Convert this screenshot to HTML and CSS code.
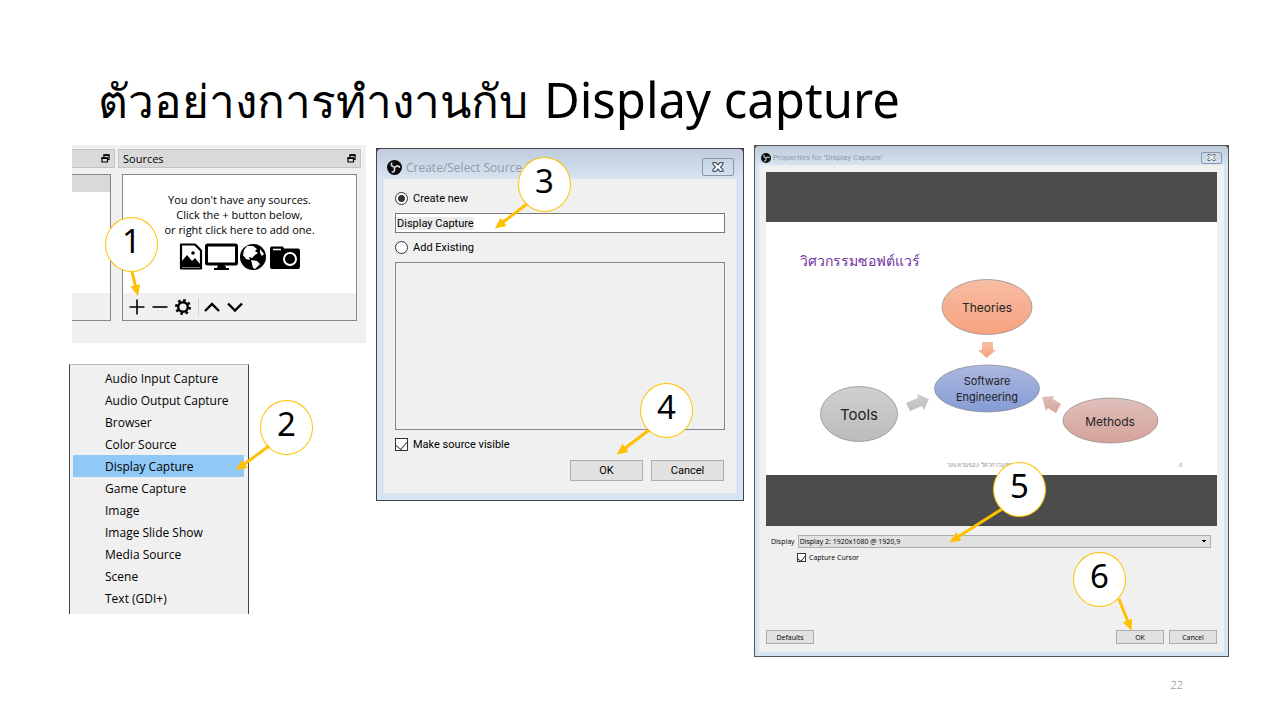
FILE: index.html
```html
<!DOCTYPE html>
<html lang="th">
<head>
<meta charset="utf-8">
<title>Display capture</title>
<link rel="stylesheet" href="styles.css">
</head>
<body>
<svg class="defs" aria-hidden="true">
  <defs>
    <marker id="head" markerUnits="userSpaceOnUse" markerWidth="11" markerHeight="10" refX="7" refY="5" orient="auto"><path d="M0 0L11 5L0 10z" fill="#ffc000"/></marker>
    <symbol id="obs" viewBox="0 0 32 32"><circle cx="16" cy="16" r="16" fill="#0b0b0b"/><g fill="none" stroke="#d8dde3" stroke-width="3.500" stroke-linecap="round"><path d="M15 15C10 14 8 11 10 7"/><path d="M15 15C10 14 8 11 10 7" transform="rotate(120 16 16)"/><path d="M15 15C10 14 8 11 10 7" transform="rotate(240 16 16)"/></g></symbol>
    <symbol id="close" viewBox="0 0 12 10"><path d="M1 .7h3l2 2.3 2-2.3h3v1.6L8.500 5 11 7.700v1.600H8L6 7 4 9.300H1V7.700L3.500 5 1 2.300z" fill="#fff" stroke="#4d5666" stroke-width="1.200"/></symbol>
    <symbol id="float" viewBox="0 0 9 9"><path d="M3 3V1h5v4.500H6.500M1 4h5.500v4H1z" fill="none" stroke="#000" stroke-width="1.200"/><path d="M2.500 1.200H8.500M.5 4.200H7" stroke="#000" stroke-width="1.800"/></symbol>
  </defs>
</svg>
<main class="slide">
  <h1 class="title"><span class="title-thai">ตัวอย่างการทำงานกับ</span> <span class="title-latin">Display capture</span></h1>
  <div class="shots">
    <div class="left">
      <section class="docks">
        <div class="dock dock-cut">
          <div class="dock-head"><svg class="float"><use href="#float"/></svg></div>
          <div class="dock-list"><div class="cut-row"></div><div class="dock-body"></div><div class="dock-tools"></div></div>
        </div>
        <div class="dock dock-main">
          <div class="dock-head"><span>Sources</span><svg class="float"><use href="#float"/></svg></div>
          <div class="dock-list">
            <div class="dock-body empty">
              <p>You don't have any sources.<br>Click the + button below,<br>or right click here to add one.</p>
              <svg class="kinds" viewBox="0 0 122 28">
                <path d="M2 1.500h14l6 6V25.500H2z" fill="#fff" stroke="#000" stroke-width="2.200" stroke-linejoin="round"/><path d="M3 24v-6l5-6 5 6 3-3 5 6v3z"/><circle cx="14" cy="10" r="1.800"/>
                <rect x="27.500" y="2" width="30" height="19" rx="1" fill="#fff" stroke="#000" stroke-width="3"/><path d="M39 22h7l1 3h3v2H35v-2h3z"/>
                <circle cx="74" cy="14" r="13"/><path d="M68 3l6 0 4 3-2 2 3 2-3 2-3 3-3-1 1 3-4-1-3-4 1-5zM72 17l6 1 3 3-5 5-2-1zM81 6l4 5-2 2-2-3z" fill="#fff"/>
                <path d="M92 3.500h12l1 2h14a2 2 0 0 1 2 2V24a2 2 0 0 1-2 2H93a2 2 0 0 1-2-2V5z"/><path d="M94 6.500h8" stroke="#fff" stroke-width="1.500"/><circle cx="111" cy="16" r="6" fill="none" stroke="#fff" stroke-width="2"/>
              </svg>
            </div>
            <div class="dock-tools">
              <button class="tool" aria-label="Add"><svg viewBox="0 0 16 16"><path d="M8 .5v15M.5 8h15"/></svg></button>
              <button class="tool" aria-label="Remove"><svg viewBox="0 0 16 16"><path d="M.5 8h15"/></svg></button>
              <button class="tool" aria-label="Settings"><svg viewBox="0 0 16 16"><circle cx="8" cy="8" r="4.800" stroke-width="2.400"/><circle cx="8" cy="8" r="6.700" stroke-width="2.600" stroke-dasharray="2.600 2.660"/></svg></button>
              <span class="split"></span>
              <button class="tool" aria-label="Up"><svg viewBox="0 0 16 16"><path d="M1 12l7-7 7 7" stroke-width="2.400"/></svg></button>
              <button class="tool" aria-label="Down"><svg viewBox="0 0 16 16"><path d="M1 4.500l7 7 7-7" stroke-width="2.400"/></svg></button>
            </div>
          </div>
        </div>
        <div class="callout c1"><svg><path d="M26 54L31 74"/></svg>1</div>
      </section>
      <section class="menu-wrap">
        <ul class="menu">
          <li><button>Audio Input Capture</button></li>
          <li><button>Audio Output Capture</button></li>
          <li><button>Browser</button></li>
          <li><button>Color Source</button></li>
          <li><button class="on">Display Capture</button></li>
          <li><button>Game Capture</button></li>
          <li><button>Image</button></li>
          <li><button>Image Slide Show</button></li>
          <li><button>Media Source</button></li>
          <li><button>Scene</button></li>
          <li><button>Text (GDI+)</button></li>
        </ul>
        <div class="callout c2"><svg><path d="M8 45L-22 67"/></svg>2</div>
      </section>
    </div>

    <section class="dialog create">
      <div class="frame">
        <header class="bar"><svg class="logo"><use href="#obs"/></svg><span>Create/Select Source</span><button class="x" aria-label="Close"><svg><use href="#close"/></svg></button></header>
        <div class="body">
          <label class="opt"><input type="radio" name="mode" checked>Create new</label>
          <div class="field"><input class="name" type="text" value="Display Capture" aria-label="Source name"></div>
          <label class="opt"><input type="radio" name="mode">Add Existing</label>
          <div class="existing"></div>
          <label class="opt"><input type="checkbox" checked>Make source visible</label>
          <div class="actions"><button class="btn">OK</button><button class="btn">Cancel</button></div>
        </div>
      </div>
      <div class="callout c3"><svg><path d="M8 46L-21 68"/></svg>3</div>
      <div class="callout c4"><svg><path d="M8 46L-21 68"/></svg>4</div>
    </section>

    <section class="dialog props">
      <div class="frame">
        <header class="bar"><svg class="logo"><use href="#obs"/></svg><span>Properties for 'Display Capture'</span><button class="x" aria-label="Close"><svg><use href="#close"/></svg></button></header>
        <div class="body">
          <div class="preview">
            <svg class="diagram" viewBox="0 0 451 253">
              <defs>
                <linearGradient id="o" x2="0" y2="1"><stop stop-color="#f6bda6"/><stop offset="1" stop-color="#f8a27e"/></linearGradient>
                <linearGradient id="b" x2="0" y2="1"><stop stop-color="#abb8df"/><stop offset="1" stop-color="#869bd6"/></linearGradient>
                <linearGradient id="g" x2="0" y2="1"><stop stop-color="#d0d0d0"/><stop offset="1" stop-color="#bcbcbc"/></linearGradient>
                <linearGradient id="r" x2="0" y2="1"><stop stop-color="#dfc0bb"/><stop offset="1" stop-color="#d5a29a"/></linearGradient>
              </defs>
              <rect width="451" height="253" fill="#fff"/>
              <text class="d-title" x="34" y="44">วิศวกรรมซอฟต์แวร์</text>
              <g stroke="#888" stroke-width=".7">
                <ellipse cx="221" cy="85" rx="45" ry="27.500" fill="url(#o)"/>
                <ellipse cx="221" cy="166.500" rx="52.500" ry="23.500" fill="url(#b)"/>
                <ellipse cx="93" cy="192" rx="38.500" ry="27.500" fill="url(#g)"/>
                <ellipse cx="344.500" cy="198.500" rx="47.500" ry="22.500" fill="url(#r)"/>
              </g>
              <path d="M216 120h11v8h3l-9.500 8-8.500-8h4z" fill="url(#o)"/>
              <path d="M140 181l12-5-1-4 12 5-5 11-2-4-12 5z" fill="url(#g)"/>
              <path d="M276 175l12-1-1 3 8 5-5 9-8-5-2 3z" fill="url(#r)"/>
              <g class="d-text"><text x="221" y="90" font-size="12">Theories</text><text x="221" y="163" font-size="11">Software</text><text x="221" y="179" font-size="11">Engineering</text><text x="93" y="198" font-size="15">Tools</text><text x="344" y="204" font-size="12">Methods</text></g>
              <text class="d-foot" x="181" y="245">วงแหวนของ วิศวกรรมซอฟต์</text><text class="d-foot" x="413" y="245">8</text>
            </svg>
          </div>
          <div class="row"><label for="display">Display</label><select id="display"><option>Display 2: 1920x1080 @ 1920,9</option></select></div>
          <label class="opt cursor"><input type="checkbox" checked>Capture Cursor</label>
          <div class="actions"><button class="btn first">Defaults</button><button class="btn">OK</button><button class="btn">Cancel</button></div>
        </div>
      </div>
      <div class="callout c5"><svg><path d="M8 46L-41 77"/></svg>5</div>
      <div class="callout c6"><svg><path d="M45 46L56 74"/></svg>6</div>
    </section>
  </div>
  <footer class="page">22</footer>
</main>
</body>
</html>
```
FILE: styles.css
```css
* { box-sizing: border-box; }
body { margin: 0; background: #fff; color: #000; font-family: "Open Sans", "Noto Sans", sans-serif; font-size: 12px; }
button, input, select { font: inherit; color: inherit; margin: 0; padding: 0; }
svg { display: block; }
.defs { position: absolute; width: 0; height: 0; }
.slide { min-height: 100vh; padding: 60px 51px 0 69px; }
.title { margin: 0; padding-left: 29px; height: 85px; line-height: 78px; font-weight: 400; font-size: 46px; white-space: nowrap; }
.title-latin { margin-left: 4px; font-family: "Noto Sans", sans-serif; font-size: 49px; }
.shots { display: grid; grid-template-columns: 297fr 368fr 475fr; gap: 10px; align-items: start; }

/* OBS docks */
.docks { position: relative; margin-left: 3px; height: 198px; padding: 4px 5px 0 0; display: flex; gap: 3px; background: #f0f0f0; }
.dock { display: flex; flex-direction: column; gap: 6px; }
.dock-cut { width: 43px; }
.dock-main { flex: 1; }
.dock-head { height: 19px; padding: 0 4px; display: flex; align-items: center; justify-content: space-between; background: #dadada; border: 1px solid #c4c4c4; font-size: 11px; }
.dock-cut .dock-head { border-left: 0; justify-content: flex-end; }
.float { width: 9px; height: 9px; }
.dock-list { height: 147px; margin: 0 4px; display: flex; flex-direction: column; border: 1px solid #828790; background: #fff; }
.dock-cut .dock-list { margin-left: 0; border-left: 0; }
.cut-row { height: 17px; background: #d9d9d9; }
.dock-body { flex: 1; }
.empty { display: flex; flex-direction: column; align-items: center; gap: 6px; padding-top: 17px; }
.empty p { margin: 0; text-align: center; line-height: 15px; font-size: 11px; white-space: nowrap; }
.kinds { width: 122px; height: 28px; }
.dock-tools { height: 27px; padding: 0 6px; display: flex; align-items: center; gap: 7px; background: #f0f0f0; }
.tool { width: 16px; height: 16px; border: 0; background: none; }
.tool svg { width: 16px; height: 16px; fill: none; stroke: #000; stroke-width: 1.600; }
.split { width: 1px; height: 18px; margin-right: -2px; background: #d0d0d0; }

/* Source type menu */
.menu-wrap { position: relative; width: 180px; margin-top: 21px; }
.menu { margin: 0; padding: 2px 4px 5px 3px; list-style: none; background: #f0f0f0; border: 1px solid #444; border-top-color: #bbb; border-bottom: 0; }
.menu button { width: 100%; height: 22px; padding-left: 32px; border: 0; background: none; text-align: left; display: block; white-space: nowrap; }
.menu .on { background: #90c8f6; }

/* Dialog windows */
.dialog { position: relative; padding: 1px; background: #444; }
.frame { border-radius: 4px 4px 0 0; background: linear-gradient(#bfccdb, #d7e4f2 30px); padding: 0 7px 7px; }
.bar { display: flex; align-items: center; color: #929aa5; white-space: nowrap; }
.x { margin-left: auto; display: grid; place-items: center; border: 1px solid #8b97aa; border-radius: 2px; background: none; }
.body { background: #f0f0f0; display: flex; flex-direction: column; }
.opt { display: flex; align-items: center; white-space: nowrap; }
input[type=radio], input[type=checkbox] { appearance: none; flex: none; background: #fff; border: 1px solid #333; }
input[type=radio] { border-radius: 50%; }
input[type=radio]:checked { background: radial-gradient(circle, #333 0 3px, #fff 4px); }
input[type=checkbox]::after { content: ""; display: block; width: 50%; height: 80%; margin: 0 auto; border: solid #444; border-width: 0 1px 1px 0; transform: rotate(40deg); }
.actions { display: flex; justify-content: flex-end; }
.btn { background: #e1e1e1; border: 1px solid #adadad; }

.create { margin-top: 3px; font-size: 11px; }
.create .bar { height: 30px; padding: 6px 2px 0 3px; gap: 4px; font-size: 12px; }
.create .logo { width: 15px; height: 15px; }
.create .x { width: 32px; height: 18px; }
.create .x svg { width: 12px; height: 10px; }
.create .body { height: 314px; padding: 12px 11px; font-family: Roboto, sans-serif; }
.create .opt { height: 15px; gap: 5px; }
.create input[type=radio], .create input[type=checkbox] { width: 13px; height: 13px; }
.field { height: 20px; margin: 7px 0; background: #fff; border: 1px solid #7a7a7a; padding: 0 1px; }
.name { display: block; width: 100%; height: 18px; border: 0; background: linear-gradient(#ebebeb, #ebebeb) 0 3px / 77px 13px no-repeat; }
.existing { flex: 1; margin: 7px 0; border: 1px solid #828790; }
.create .actions { gap: 8px; margin-top: 8px; padding-right: 1px; }
.create .btn { width: 73px; height: 21px; }

.props { background: #555; font-size: 7px; }
.props .frame { padding: 0 4px 4px; background: linear-gradient(#bfccdb, #d7e4f2 20px); }
.props .bar { height: 19px; padding: 4px 2px 0; gap: 2px; font-size: 8px; font-family: Roboto, sans-serif; }
.props .logo { width: 10px; height: 10px; }
.props .x { width: 21px; height: 12px; }
.props .x svg { width: 9px; height: 7px; }
.props .body { height: 487px; padding: 7px; }
.preview { padding: 50px 0; background: #4c4c4c; border-bottom: 1px solid #444; }
.diagram { width: 100%; }
.d-title { font-size: 14px; font-weight: 500; fill: #7030a0; }
.d-text { text-anchor: middle; fill: #222; font-family: Inter, sans-serif; }
.d-foot { font-size: 6px; fill: #999; }
.row { display: flex; align-items: center; gap: 3px; margin: 9px 6px 0 5px; }
.row select { flex: 1; height: 13px; appearance: none; border: 1px solid #adadad; border-radius: 0; padding: 0 1px; background: #e1e1e1 conic-gradient(from -45deg at 50% 100%, #000 90deg, transparent 0) right 3px center / 6px 3px no-repeat; }
.cursor { gap: 3px; height: 13px; margin: 3px 0 0 31px; }
.props input[type=checkbox] { width: 9px; height: 9px; }
.props .actions { gap: 5px; margin: auto 0 1px; }
.props .btn { width: 48px; height: 14px; }
.props .first { margin-right: auto; }

/* Numbered callouts */
.callout { position: absolute; z-index: 1; width: 53px; height: 55px; border: 1px solid #ffc000; border-radius: 50%; background: #fff; font: 33px/46px "Noto Sans", sans-serif; text-align: center; }
.callout svg { position: absolute; inset: 0; width: 1px; height: 1px; overflow: visible; fill: none; stroke: #ffc000; stroke-width: 3; }
.callout path { marker-end: url(#head); }
.c1 { left: 33px; top: 72px; }
.c2 { left: 191px; top: 36px; }
.c3 { left: 142px; top: 9px; }
.c4 { left: 264px; top: 235px; }
.c5 { left: 239px; top: 317px; }
.c6 { left: 319px; top: 407px; }

.page { margin-top: 20px; padding-right: 46px; text-align: right; color: #777; font-size: 11px; line-height: 16px; font-weight: 300; }
```
